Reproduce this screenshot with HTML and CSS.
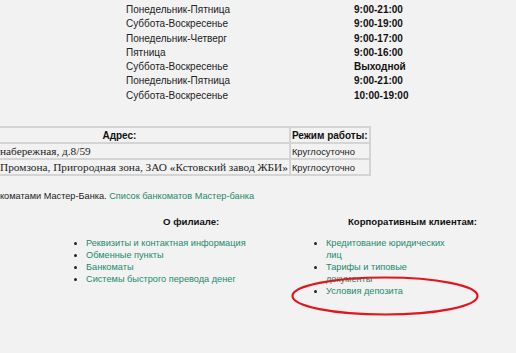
FILE: index.html
```html
<!DOCTYPE html>
<html lang="ru">
<head>
    <meta charset="UTF-8">
    <title>Филиал — режим работы</title>
    <link rel="stylesheet" href="styles.css">
</head>
<body>
    <div class="page">
        <!-- Schedule -->
        <div class="schedule">
            <span class="day">Понедельник-Пятница</span><span class="hours">9:00-21:00</span>
            <span class="day">Суббота-Воскресенье</span><span class="hours">9:00-19:00</span>
            <span class="day">Понедельник-Четверг</span><span class="hours">9:00-17:00</span>
            <span class="day">Пятница</span><span class="hours">9:00-16:00</span>
            <span class="day">Суббота-Воскресенье</span><span class="hours">Выходной</span>
            <span class="day">Понедельник-Пятница</span><span class="hours">9:00-21:00</span>
            <span class="day">Суббота-Воскресенье</span><span class="hours">10:00-19:00</span>
        </div>

        <!-- ATM table -->
        <table class="atm-table">
            <tr>
                <th class="addr-head">Адрес:</th>
                <th class="mode-head">Режим работы:</th>
            </tr>
            <tr>
                <td class="addr">набережная, д.8/59</td>
                <td class="mode">Круглосуточно</td>
            </tr>
            <tr>
                <td class="addr">Промзона, Пригородная зона, ЗАО «Кстовский завод ЖБИ»</td>
                <td class="mode">Круглосуточно</td>
            </tr>
        </table>

        <p class="atm-note">коматами Мастер-Банка. <a href="#">Список банкоматов Мастер-банка</a></p>

        <!-- Links -->
        <div class="sections">
            <div class="section section-left">
                <h3>О филиале:</h3>
                <ul>
                    <li><a href="#">Реквизиты и контактная информация</a></li>
                    <li><a href="#">Обменные пункты</a></li>
                    <li><a href="#">Банкоматы</a></li>
                    <li><a href="#">Системы быстрого перевода денег</a></li>
                </ul>
            </div>
            <div class="section section-right">
                <h3>Корпоративным клиентам:</h3>
                <ul>
                    <li><a href="#">Кредитование юридических лиц</a></li>
                    <li><a href="#">Тарифы и типовые документы</a></li>
                    <li><a href="#">Условия депозита</a></li>
                </ul>
            </div>
        </div>

        <!-- Hand-drawn mark -->
        <svg class="mark" width="200" height="44" viewBox="0 0 200 44">
            <ellipse cx="100" cy="22" rx="92.5" ry="18.5" fill="none" stroke="#e3141b" stroke-width="2.2"/>
        </svg>
    </div>
</body>
</html>
```

FILE: styles.css
```css
/* Branch page fragment */
body {
    margin: 0;
    background: #f2f2f2;
    font-family: 'Liberation Sans', Arial, sans-serif;
    color: #222;
    overflow: hidden;
}

.page {
    position: relative;
    width: 516px;
    height: 353px;
}

a {
    color: #24896c;
    text-decoration: none;
}

/* Schedule */
.schedule {
    display: grid;
    grid-template-columns: 228px auto;
    padding: 3px 0 0 126px;
    font-size: 10px;
    line-height: 14.3px;
}

.hours {
    font-weight: bold;
    color: #111;
}

/* ATM table */
.atm-table {
    margin: 23px 0 0 -52px;
    border-collapse: collapse;
    border: 2px solid #cfcfcf;
}

.atm-table th,
.atm-table td {
    border: 2px solid #d4d4d4;
    padding: 0 1px;
    height: 14px;
}

.atm-table .addr-head {
    font-size: 10px;
    text-align: center;
    color: #111;
}

.atm-table .mode-head {
    font-size: 10px;
    text-align: left;
    color: #111;
}

.atm-table .addr {
    font-family: 'Liberation Serif', 'Times New Roman', serif;
    font-size: 11.3px;
    padding-left: 50px;
    white-space: nowrap;
}

.atm-table .mode {
    font-size: 9.4px;
}

.atm-note {
    margin: 15px 0 0;
    font-size: 9.2px;
}

/* Sections */
.sections {
    display: grid;
    grid-template-columns: 300px 216px;
    margin-top: 14px;
}

.section h3 {
    margin: 0;
    font-size: 9.6px;
    line-height: 14px;
    color: #111;
}

.section-left h3 {
    padding-left: 163px;
}

.section-right h3 {
    padding-left: 48px;
}

.section ul {
    margin: 8px 0 0;
    padding: 0;
    font-size: 9.2px;
    line-height: 12px;
}

.section-left ul {
    padding-left: 86px;
}

.section-right ul {
    padding-left: 26px;
    width: 128px;
}

.mark {
    position: absolute;
    left: 285px;
    top: 274px;
}
```
